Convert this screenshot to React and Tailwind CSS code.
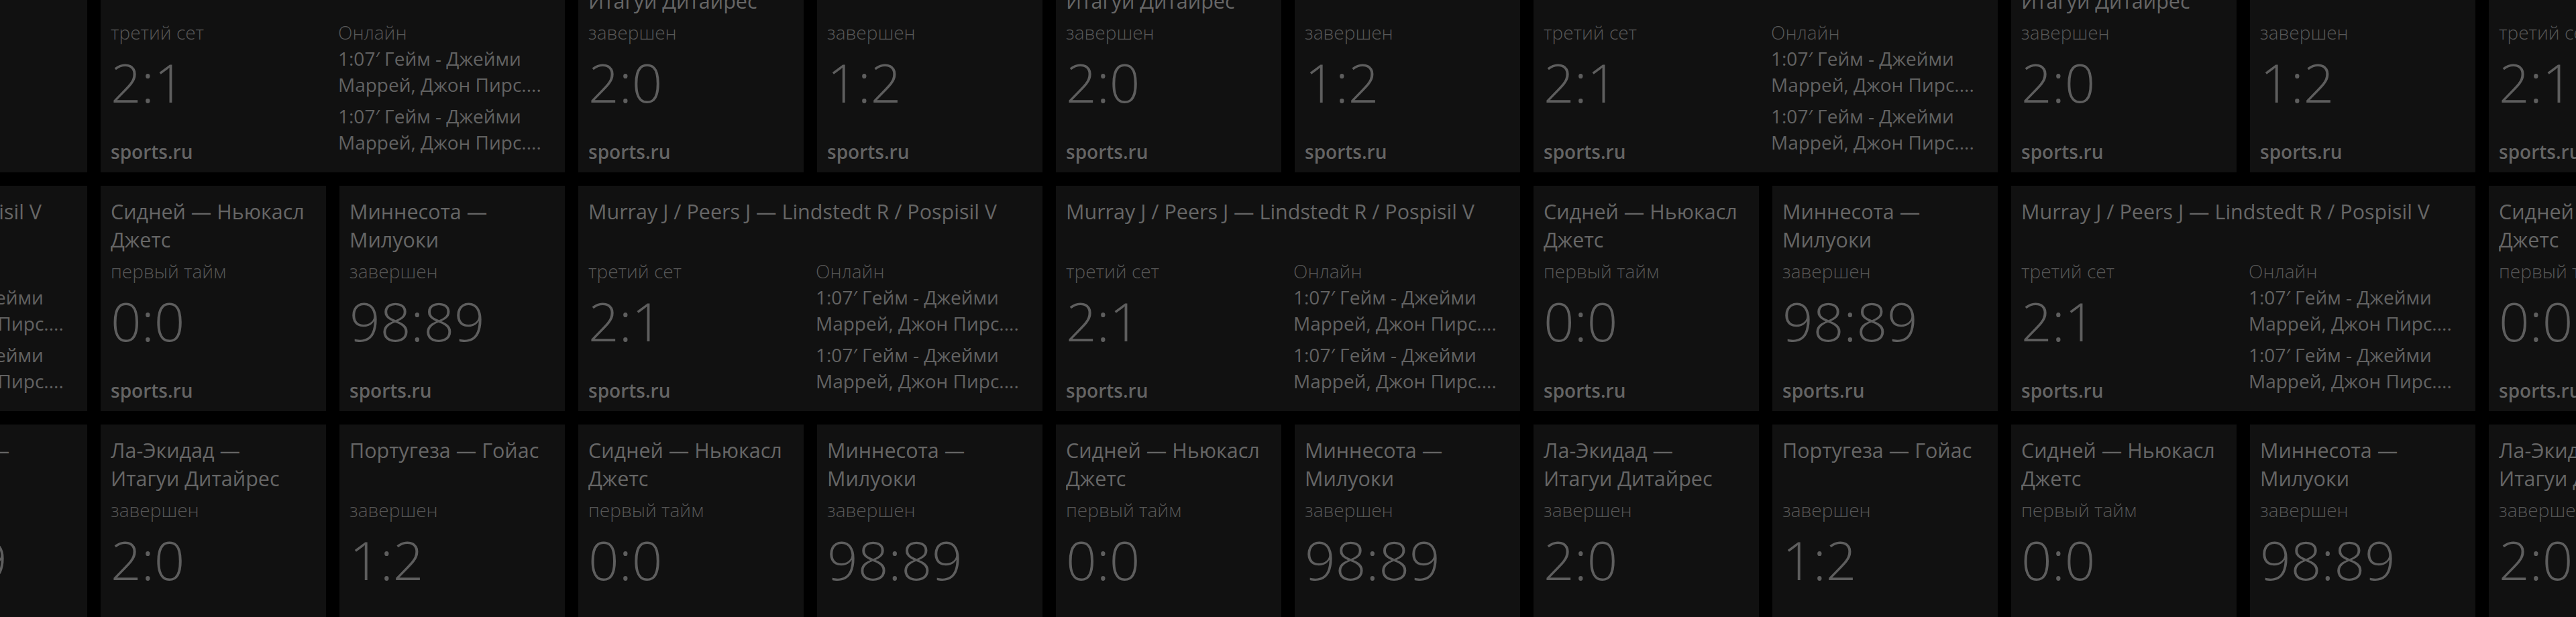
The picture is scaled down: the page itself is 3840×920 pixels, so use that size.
import React from "react";

const matches = {
  sydney: { title: "Сидней — Ньюкасл Джетс", status: "первый тайм", score: "0:0" },
  minnesota: { title: "Миннесота — Милуоки", status: "завершен", score: "98:89" },
  laEkidad: { title: "Ла-Экидад — Итагуи\u00a0Дитайрес", status: "завершен", score: "2:0" },
  portuguesa: { title: "Португеза — Гойас", status: "завершен", score: "1:2" },
  tennis: {
    title: "Murray J / Peers J — Lindstedt R / Pospisil V",
    status: "третий сет",
    score: "2:1",
    wide: true,
    online: [
      ["1:07′ Гейм - Джейми", "Маррей, Джон Пирс...."],
      ["1:07′ Гейм - Джейми", "Маррей, Джон Пирс...."],
    ],
  },
};

// раскладка плиток по строкам (как на стартовом экране)
const board = [
  "portuguesa", "portuguesa", "tennis", "laEkidad", "portuguesa", "laEkidad", "portuguesa", "tennis", "laEkidad", "portuguesa", "tennis",
  "tennis", "sydney", "minnesota", "tennis", "tennis", "sydney", "minnesota", "tennis", "sydney", "minnesota",
  "minnesota", "minnesota", "laEkidad", "portuguesa", "sydney", "minnesota", "sydney", "minnesota", "laEkidad", "portuguesa", "sydney", "minnesota", "laEkidad", "portuguesa",
];

const Title = ({ children, nowrap }) => (
  <div
    className={
      "h-[84px] overflow-hidden text-[30.5px] leading-[42px] text-[#666666]" +
      (nowrap ? " whitespace-nowrap" : "")
    }
  >
    {children}
  </div>
);

const Status = ({ children }) => (
  <div className="mt-2 text-[28px] font-light leading-[36px] text-[#575757]">{children}</div>
);

const Score = ({ children }) => (
  <div className="mt-4 text-[80px] font-light leading-[80px] text-[#5e5e5e]">{children}</div>
);

const Source = () => (
  <div className="mt-auto text-[28px] font-semibold leading-[36px] text-[#646464]">sports.ru</div>
);

const Tile = ({ match }) => (
  <div className="flex h-[336px] w-[336px] flex-col overflow-hidden bg-[#111111] pt-[17px] pr-[14px] pb-[13px] pl-[15px]">
    <Title>{match.title}</Title>
    <Status>{match.status}</Status>
    <Score>{match.score}</Score>
    <Source />
  </div>
);

const WideTile = ({ match }) => (
  <div className="col-span-2 flex h-[336px] flex-col overflow-hidden bg-[#111111] pt-[17px] pb-[13px] pl-[15px]">
    <Title nowrap>{match.title}</Title>
    <div className="flex flex-1">
      <div className="flex w-[339px] shrink-0 flex-col">
        <Status>{match.status}</Status>
        <Score>{match.score}</Score>
        <Source />
      </div>
      <div className="flex min-w-0 flex-1 flex-col pr-[14px]">
        <Status>Онлайн</Status>
        <div className="mt-[2px] flex flex-col gap-2">
          {match.online.map((item, i) => (
            <div key={i} className="text-[28px] leading-[39px] text-[#626262]">
              <div className="whitespace-nowrap">{item[0]}</div>
              <div className="truncate">{item[1]}</div>
            </div>
          ))}
        </div>
      </div>
    </div>
  </div>
);

export default function App() {
  return (
    <div className="h-[920px] w-full overflow-hidden bg-black font-['Open_Sans',sans-serif]">
      <div className="-mt-[79px] -ml-[562px] grid w-max grid-cols-[repeat(14,336px)] auto-rows-[336px] gap-5">
        {board.map((key, i) => {
          const match = matches[key];
          return match.wide ? <WideTile key={i} match={match} /> : <Tile key={i} match={match} />;
        })}
      </div>
    </div>
  );
}
